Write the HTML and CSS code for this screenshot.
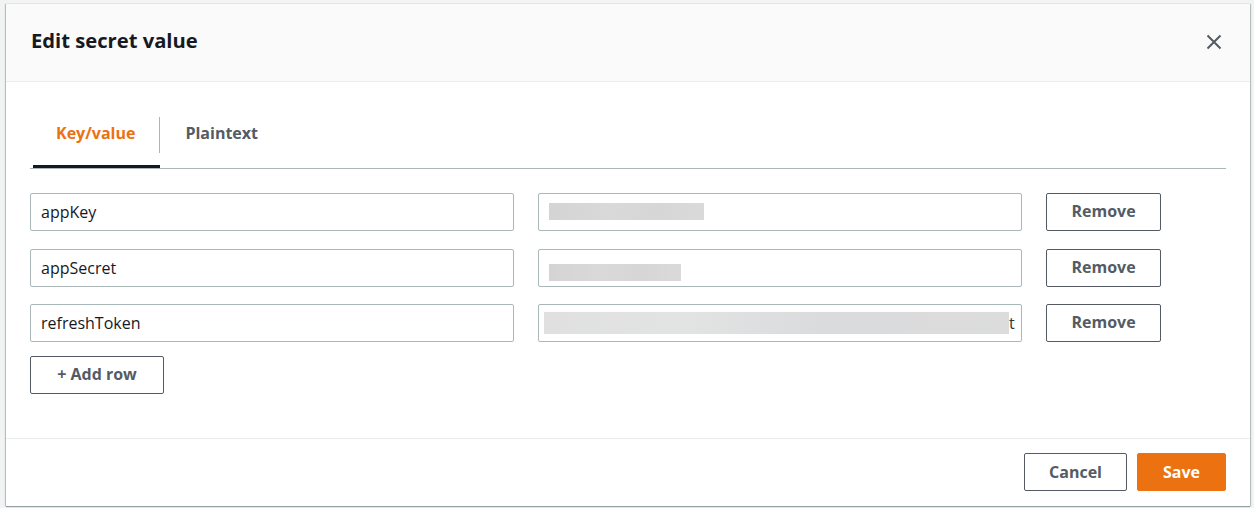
FILE: index.html
```html
<!DOCTYPE html>
<html>
<head>
<meta charset="utf-8">
<link rel="stylesheet" href="styles.css">
</head>
<body>
<div class="modal">
  <div class="modal-header">
    <h2 class="title">Edit secret value</h2>
    <button class="close" aria-label="Close">
      <svg width="18" height="18" viewBox="0 0 18 18"><path d="M2.5 2.5 L15.5 15.5 M15.5 2.5 L2.5 15.5" stroke="#545b64" stroke-width="2" fill="none"/></svg>
    </button>
  </div>
  <div class="modal-body">
    <div class="tabs">
      <div class="tab active"><span class="tab-label">Key/value</span></div>
      <div class="tab"><span class="tab-label">Plaintext</span></div>
    </div>
    <div class="rows">
      <div class="row">
        <div class="input">appKey</div>
        <div class="input value"><span class="redact r1"></span></div>
        <button class="btn">Remove</button>
      </div>
      <div class="row">
        <div class="input">appSecret</div>
        <div class="input value"><span class="redact r2"></span></div>
        <button class="btn">Remove</button>
      </div>
      <div class="row">
        <div class="input">refreshToken</div>
        <div class="input value v3"><span class="redact r3"></span><span class="tail">t</span></div>
        <button class="btn">Remove</button>
      </div>
    </div>
    <button class="btn add">+ Add row</button>
  </div>
  <div class="modal-footer">
    <button class="btn cancel">Cancel</button>
    <button class="btn primary">Save</button>
  </div>
</div>
</body>
</html>
```

FILE: styles.css
```css
* { box-sizing: border-box; }
html, body { margin: 0; padding: 0; }
body {
  background: #f2f3f3;
  font-family: "Open Sans", "Liberation Sans", Arial, sans-serif;
  color: #16191f;
  width: 1254px;
  height: 508px;
  overflow: hidden;
  padding: 4px 4px 0 6px;
}
.modal {
  width: 1244px;
  height: 502px;
  background: #fff;
  box-shadow: 0 1px 1px 0 rgba(0,28,36,.35), 1px 0 1px 0 rgba(0,28,36,.2), -1px 0 1px 0 rgba(0,28,36,.2);
  display: flex;
  flex-direction: column;
}
.modal-header {
  height: 78px;
  background: #fafafa;
  border-bottom: 1px solid #eaeded;
  display: flex;
  align-items: center;
  justify-content: space-between;
  padding: 0 24px 0 25px;
}
.title {
  margin: 0;
  font-size: 20.2px;
  font-weight: 700;
  line-height: 28px;
  color: #16191f;
  padding-bottom: 5px;
}
.close {
  background: none;
  border: 0;
  padding: 0;
  width: 18px;
  height: 18px;
  display: flex;
  margin-right: 3px;
  margin-bottom: 2px;
}
.modal-body {
  flex: 1;
  padding: 35px 24px 0 24px;
}
.tabs {
  display: flex;
  border-bottom: 1px solid #aab7b8;
  padding-left: 3px;
  height: 52px;
}
.tab {
  height: 51px;
  position: relative;
}
.tab-label {
  display: block;
  height: 36px;
  line-height: 32px;
  font-size: 16px;
  font-weight: 700;
  color: #545b64;
}
.tab:first-child .tab-label {
  padding: 0 24px 0 23px;
  border-right: 1px solid #aab7b8;
}
.tab:nth-child(2) .tab-label {
  padding: 0 20px 0 25px;
}
.tab.active .tab-label { color: #ec7211; }
.tab.active::after {
  content: "";
  position: absolute;
  left: 0;
  right: 0;
  bottom: 0;
  height: 3px;
  background: #16191f;
}
.rows {
  margin-top: 24px;
  display: flex;
  flex-direction: column;
  gap: 17.5px;
}
.row {
  display: flex;
  gap: 24px;
  align-items: center;
}
.input {
  width: 484px;
  height: 38px;
  border: 1px solid #aab7b8;
  border-radius: 2px;
  padding: 0 10px;
  font-size: 16px;
  line-height: 36px;
  color: #16191f;
  display: flex;
  align-items: center;
}
.value { padding-left: 10px; }
.v3 { padding: 0 4px 0 5px; }
.redact {
  display: block;
  flex-shrink: 0;
  background: linear-gradient(90deg, #d4d4d4, #d9d9d9 40%, #d6d6d6 70%, #dadada);
}
.r1 { width: 155px; height: 17px; margin-top: -1px; }
.r2 { width: 132px; height: 17px; margin-top: 9px; }
.r3 { width: 465px; height: 22px; background: linear-gradient(90deg, #e0e0e0, #e2e3e3 30%, #dadbdc 60%, #dcdcdc); }
.tail { font-size: 16px; color: #333; margin-left: 0; }
.btn {
  font-family: "Open Sans", "Liberation Sans", Arial, sans-serif;
  height: 38px;
  border: 1px solid #545b64;
  border-radius: 2px;
  background: #fff;
  color: #545b64;
  font-size: 16px;
  font-weight: 700;
  padding: 0 0 2px 0;
  cursor: pointer;
}
.row .btn { width: 115px; }
.add {
  width: 134px;
  margin-top: 14px;
}
.modal-footer {
  height: 68px;
  border-top: 1px solid #eaeded;
  display: flex;
  justify-content: flex-end;
  align-items: center;
  gap: 10px;
  padding: 0 24px 2px 0;
}
.cancel { width: 103px; padding: 0; }
.primary {
  width: 89px;
  padding: 0;
  background: #ec7211;
  border-color: #ec7211;
  color: #fff;
}
```
